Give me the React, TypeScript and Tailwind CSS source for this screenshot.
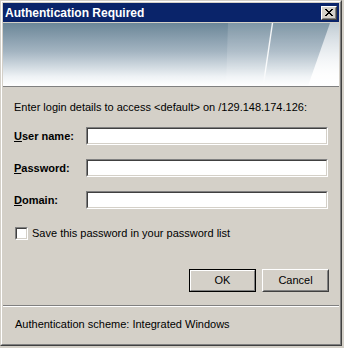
import React from "react";

function Sunken({ className = "" }: { className?: string }) {
  return (
    <div className={"border border-t-[#808080] border-l-[#808080] border-r-white border-b-white " + className}>
      <div className="h-full w-full border border-t-[#404040] border-l-[#404040] border-r-[#d4d0c8] border-b-[#d4d0c8] bg-white" />
    </div>
  );
}

function Banner() {
  return (
    <svg width="336" height="63" viewBox="0 0 336 63" className="block">
      <defs>
        <linearGradient id="bg" x1="0" y1="0" x2="0" y2="1">
          <stop offset="0" stopColor="#6b8698" />
          <stop offset="0.45" stopColor="#a3b4c1" />
          <stop offset="0.85" stopColor="#eef2f5" />
          <stop offset="1" stopColor="#ffffff" />
        </linearGradient>
        <linearGradient id="ln" x1="0" y1="0" x2="0" y2="1">
          <stop offset="0" stopColor="#ffffff" stopOpacity="0.9" />
          <stop offset="0.8" stopColor="#ffffff" stopOpacity="0.9" />
          <stop offset="1" stopColor="#ffffff" stopOpacity="0" />
        </linearGradient>
        <linearGradient id="tri" x1="0" y1="0" x2="0" y2="1">
          <stop offset="0" stopColor="#ffffff" stopOpacity="0.5" />
          <stop offset="1" stopColor="#ffffff" stopOpacity="1" />
        </linearGradient>
      </defs>
      <rect x="0" y="0" width="336" height="63" fill="url(#bg)" />
      <polygon points="225,0 336,0 336,63 223,63" fill="#ffffff" fillOpacity="0.14" />
      <line x1="269.5" y1="0" x2="260.5" y2="61" stroke="url(#ln)" strokeWidth="1.4" />
      <polygon points="327,0 336,0 336,63 305,63" fill="url(#tri)" />
    </svg>
  );
}

export default function App() {
  return (
    <div className="w-[344px] h-[348px] bg-[#d4d0c8] font-['Liberation_Sans',Arial,sans-serif] text-black">
      <div className="w-[342px] h-[346px] border border-t-[#d4d0c8] border-l-[#d4d0c8] border-r-[#404040] border-b-[#404040]">
        <div className="h-full border border-t-white border-l-white border-r-[#808080] border-b-[#808080] p-px flex flex-col bg-[#d4d0c8]">
          {/* Title bar */}
          <div className="h-[19px] bg-[#0a246a] flex items-center justify-between pl-[2px] pr-[2px]">
            <span className="text-white font-bold text-[12px] leading-[14px]">Authentication Required</span>
            <div className="w-[16px] h-[14px] border border-t-white border-l-white border-r-[#404040] border-b-[#404040]">
              <div className="h-full w-full border border-t-[#d4d0c8] border-l-[#d4d0c8] border-r-[#808080] border-b-[#808080] bg-[#d4d0c8] flex items-center justify-center">
                <svg width="8" height="7" viewBox="0 0 8 7" className="block">
                  <path d="M0 0h2v1h1v1h2V1h1V0h2v1H7v1H6v1H5v1h1v1h1v1h1v1H6V6H5V5H3v1H2v1H0V6h1V5h1V4h1V3H2V2H1V1H0z" fill="#000" />
                </svg>
              </div>
            </div>
          </div>
          <div className="h-px bg-[#d4d0c8]" />
          <Banner />
          <div className="h-px bg-[#808080]" />

          {/* Content */}
          <div className="flex-1 flex flex-col text-[11px] leading-[13px]">
            <div className="mt-[14px] pl-[11px]">Enter login details to access &lt;default&gt; on /129.148.174.126:</div>

            <div className="mt-[13px] pl-[11px] pr-[11px] flex flex-col gap-[14px]">
              <div className="flex items-center h-[18px]">
                <span className="w-[72px] font-bold"><span className="underline">U</span>ser name:</span>
                <Sunken className="flex-1 h-[18px]" />
              </div>
              <div className="flex items-center h-[18px]">
                <span className="w-[72px] font-bold"><span className="underline">P</span>assword:</span>
                <Sunken className="flex-1 h-[18px]" />
              </div>
              <div className="flex items-center h-[18px]">
                <span className="w-[72px] font-bold"><span className="underline">D</span>omain:</span>
                <Sunken className="flex-1 h-[18px]" />
              </div>
            </div>

            <div className="mt-[18px] pl-[12px] flex items-center h-[13px]">
              <Sunken className="w-[13px] h-[13px]" />
              <span className="ml-[4px]">Save this password in your password list</span>
            </div>

            <div className="mt-[29px] pr-[10px] flex justify-end gap-[6px]">
              <div className="w-[67px] h-[23px] border border-black">
                <div className="h-full w-full border border-t-white border-l-white border-r-[#808080] border-b-[#808080] flex items-center justify-center">
                  OK
                </div>
              </div>
              <div className="w-[67px] h-[23px] border border-t-white border-l-white border-r-[#404040] border-b-[#404040]">
                <div className="h-full w-full border border-t-[#d4d0c8] border-l-[#d4d0c8] border-r-[#808080] border-b-[#808080] flex items-center justify-center">
                  Cancel
                </div>
              </div>
            </div>

            <div className="mt-[13px] h-px bg-[#808080]" />
            <div className="h-px bg-white" />

            <div className="mt-[11px] pl-[12px]">Authentication scheme: Integrated Windows</div>
          </div>
        </div>
      </div>
    </div>
  );
}
